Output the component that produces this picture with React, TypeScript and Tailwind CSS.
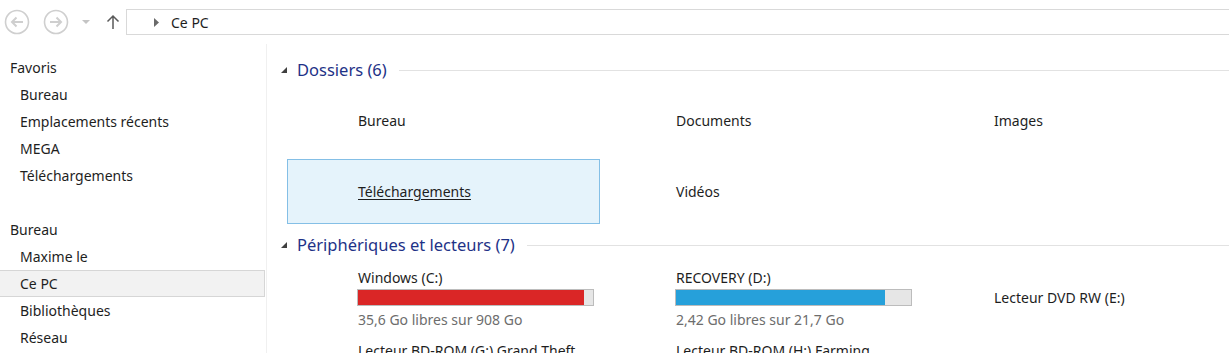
import React from 'react';

const font = { fontFamily: '"Segoe UI", "Noto Sans", "Open Sans", sans-serif' };

const NavCircle: React.FC<{ dir: 'left' | 'right' }> = ({ dir }) => (
  <svg width="26" height="26" viewBox="0 0 26 26" className="shrink-0">
    <circle cx="13" cy="13" r="11.5" fill="none" stroke="#cfcfcf" strokeWidth="1.6" />
    {dir === 'left' ? (
      <path d="M19 13H8M12.5 8.5L8 13l4.5 4.5" fill="none" stroke="#cfcfcf" strokeWidth="2" />
    ) : (
      <path d="M7 13h11M13.5 8.5L18 13l-4.5 4.5" fill="none" stroke="#cfcfcf" strokeWidth="2" />
    )}
  </svg>
);

const SideItem: React.FC<{ label: string; indent?: boolean; active?: boolean }> = ({ label, indent, active }) => (
  <div
    className={`h-[27px] flex items-center text-[14px] text-[#1e1e1e] ${indent ? 'pl-5' : 'pl-2.5'} ${
      active ? 'bg-[#f2f2f2] border-y border-r border-[#d6d6d6] mr-px' : ''
    }`}
  >
    {label}
  </div>
);

const SectionHeader: React.FC<{ title: string }> = ({ title }) => (
  <div className="h-[26px] flex items-center">
    <svg width="8" height="8" viewBox="0 0 8 8" className="ml-[13px] mr-[9px] shrink-0">
      <path d="M7 1v6H1z" fill="#404040" />
    </svg>
    <span className="text-[16.5px] text-[#1e3287] whitespace-nowrap">{title}</span>
    <div className="flex-1 h-px bg-[#e2e2e2] ml-3" />
  </div>
);

const FolderTile: React.FC<{ label: string; selected?: boolean }> = ({ label, selected }) => (
  <div
    className={`h-[65px] flex items-center pl-[70px] text-[14px] text-[#1e1e1e] border ${
      selected ? 'bg-[#e5f3fb] border-[#84bfe6] underline underline-offset-2' : 'border-transparent'
    }`}
  >
    {label}
  </div>
);

const DriveTile: React.FC<{ label: string; free?: string; pct?: number; color?: string }> = ({
  label,
  free,
  pct,
  color,
}) => {
  if (free === undefined) {
    return (
      <div className="h-[67px] flex items-center pl-[71px] text-[14px] text-[#1e1e1e]">{label}</div>
    );
  }
  return (
    <div className="h-[67px] pl-[70px] pt-1 text-[14px]">
      <div className="h-[18px] flex items-center text-[#1e1e1e] whitespace-nowrap pl-px">{label}</div>
      <div className="mt-[3px] w-[237px] h-[17px] border border-[#bcbcbc] bg-[#e6e6e6]">
        <div className="h-full" style={{ width: `${pct}%`, background: color }} />
      </div>
      <div className="mt-1 h-[18px] flex items-center text-[#6d6d6d] pl-px">{free}</div>
    </div>
  );
};

export default function App() {
  return (
    <div className="w-[1229px] h-[353px] overflow-hidden bg-white flex flex-col" style={font}>
      {/* toolbar */}
      <div className="h-[44px] flex items-center shrink-0">
        <div className="ml-1 flex items-center">
          <NavCircle dir="left" />
        </div>
        <div className="ml-[13px] flex items-center">
          <NavCircle dir="right" />
        </div>
        <svg width="8" height="5" viewBox="0 0 8 5" className="ml-[13px]">
          <path d="M0 0h8L4 4z" fill="#c4c4c4" />
        </svg>
        <svg width="14" height="16" viewBox="0 0 14 16" className="ml-[16px]">
          <path d="M7 15V2M1.5 7.5L7 2l5.5 5.5" fill="none" stroke="#5a5a5a" strokeWidth="1.5" />
        </svg>
        <div className="ml-[6px] flex-1 h-[26px] border border-[#d9d9d9] border-r-0 flex items-center self-start mt-[9px]">
          <svg width="6" height="9" viewBox="0 0 6 9" className="ml-[27px]">
            <path d="M0 0l5 4.5L0 9z" fill="#6a6a6a" />
          </svg>
          <span className="ml-[11px] text-[14px] text-[#1e1e1e]">Ce PC</span>
        </div>
      </div>

      <div className="flex flex-1 min-h-0">
        {/* sidebar */}
        <div className="w-[267px] shrink-0 border-r border-[#f0f0f0] pt-[10px]">
          <SideItem label="Favoris" />
          <SideItem label="Bureau" indent />
          <SideItem label="Emplacements récents" indent />
          <SideItem label="MEGA" indent />
          <SideItem label="Téléchargements" indent />
          <div className="h-[27px]" />
          <SideItem label="Bureau" />
          <SideItem label="Maxime le" indent />
          <SideItem label="Ce PC" indent active />
          <SideItem label="Bibliothèques" indent />
          <SideItem label="Réseau" indent />
        </div>

        {/* content */}
        <div className="flex-1 min-w-0">
          <div className="mt-[13px]">
            <SectionHeader title="Dossiers (6)" />
          </div>
          <div className="ml-5 mt-[5px] grid grid-cols-[313px_313px_313px] gap-x-[5px] gap-y-[6px]">
            <FolderTile label="Bureau" />
            <FolderTile label="Documents" />
            <FolderTile label="Images" />
            <FolderTile label="Téléchargements" selected />
            <FolderTile label="Vidéos" />
          </div>
          <div className="mt-[8px]">
            <SectionHeader title="Périphériques et lecteurs (7)" />
          </div>
          <div className="ml-5 mt-[6px] grid grid-cols-[313px_313px_313px] gap-x-[5px] gap-y-[6px]">
            <DriveTile label="Windows (C:)" free="35,6 Go libres sur 908 Go" pct={96} color="#da2626" />
            <DriveTile label="RECOVERY (D:)" free="2,42 Go libres sur 21,7 Go" pct={89} color="#26a0da" />
            <DriveTile label="Lecteur DVD RW (E:)" />
            <DriveTile label="Lecteur BD-ROM (G:) Grand Theft" free="" pct={0} color="#26a0da" />
            <DriveTile label="Lecteur BD-ROM (H:) Farming" free="" pct={0} color="#26a0da" />
          </div>
        </div>
      </div>
    </div>
  );
}
